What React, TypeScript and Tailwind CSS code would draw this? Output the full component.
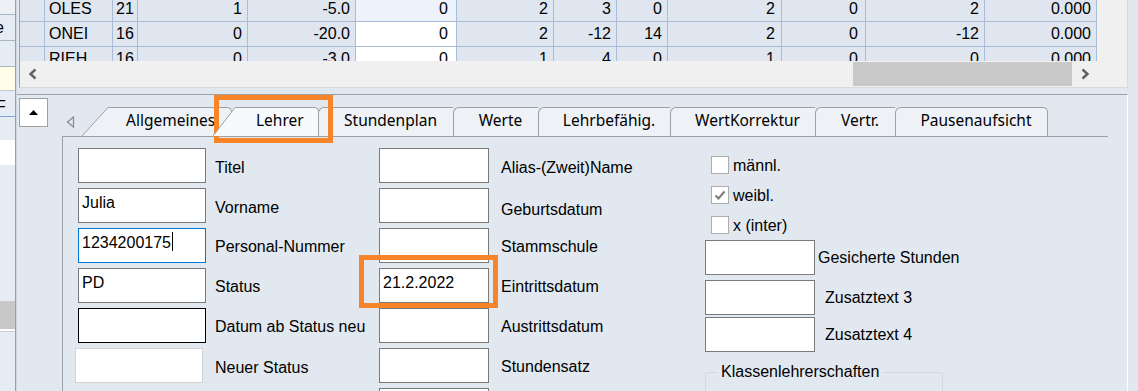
import React from "react";

type Row = { cells: string[]; hi: string };

const columns = [
  "w-[25px] justify-start",
  "w-[68px] pl-[4px] justify-start",
  "w-[25px] pl-[3px] justify-start",
  "w-[110px] pr-[5px] justify-end",
  "w-[108px] pr-[5px] justify-end",
  "w-[101px] pr-[8px] justify-end",
  "w-[97px] pr-[5px] justify-end",
  "w-[63px] pr-[5px] justify-end",
  "w-[51px] pr-[5px] justify-end",
  "w-[114px] pr-[6px] justify-end",
  "w-[84px] pr-[7px] justify-end",
  "w-[119px] pr-[5px] justify-end",
  "w-[112px] pr-[5px] justify-end",
];

const rows: Row[] = [
  { cells: ["", "OLES", "21", "1", "-5.0", "0", "2", "3", "0", "2", "0", "2", "0.000"], hi: "bg-[#eef2fa]" },
  { cells: ["", "ONEI", "16", "0", "-20.0", "0", "2", "-12", "14", "2", "0", "-12", "0.000"], hi: "bg-white" },
  { cells: ["", "RIEH", "16", "0", "-3.0", "0", "1", "4", "0", "1", "0", "0", "0.000"], hi: "bg-white" },
];

const tabs = [
  { label: "Stundenplan", w: "w-[135px]" },
  { label: "Werte", w: "w-[85px]" },
  { label: "Lehrbefähig.", w: "w-[132px]" },
  { label: "WertKorrektur", w: "w-[145px]" },
  { label: "Vertr.", w: "w-[80px]" },
  { label: "Pausenaufsicht", w: "w-[153px] border-r rounded-tr-[5px]" },
];

const Chevron = ({ dir }: { dir: "left" | "right" }) => (
  <svg width={10} height={12} viewBox="0 0 10 12" className="shrink-0">
    <path
      d={dir === "left" ? "M7.5 1.5 L2.5 6 L7.5 10.5" : "M2.5 1.5 L7.5 6 L2.5 10.5"}
      fill="none"
      stroke="#606060"
      strokeWidth={2.4}
    />
  </svg>
);

const Slant = ({ w, fill }: { w: number; fill: string }) => (
  <svg width={w} height={29} className="block shrink-0">
    <polygon points={`0,29 ${w},0.5 ${w},29`} fill={fill} />
    <line x1={0} y1={29} x2={w} y2={0.5} stroke="#a0a0a0" strokeWidth={1} />
  </svg>
);

const Field = ({
  value,
  className,
  caret,
}: {
  value?: string;
  className: string;
  caret?: boolean;
}) => (
  <div className={"h-[35px] shrink-0 bg-white border px-[3px] pt-[2px] flex items-start whitespace-nowrap " + className}>
    {value}
    {caret ? <span className="inline-block w-px h-[19px] bg-black ml-px mt-[1px]" /> : null}
  </div>
);

const Check = ({ label, checked }: { label: string; checked?: boolean }) => (
  <div className="flex items-center h-[18px] ml-[6px]">
    <div className="w-[18px] h-[18px] bg-white border border-[#adadad] flex items-center justify-center">
      {checked ? (
        <svg width={14} height={14} viewBox="0 0 14 14">
          <path d="M2.5 7.5 L5.5 10.5 L11.5 3.5" fill="none" stroke="#7a7a7a" strokeWidth={2} />
        </svg>
      ) : null}
    </div>
    <span className="ml-[4px] mt-[2px]">{label}</span>
  </div>
);

const LeftStrip = () => (
  <div className="w-[15px] shrink-0 flex flex-col bg-[#e6ecf3] overflow-hidden">
    <div className="h-[15px] border-b border-[#a9b6c6] bg-[#edf1f6]" />
    <div className="h-[26px] border-b border-[#a9b6c6] flex items-center">
      <span className="ml-[-5px]">e</span>
    </div>
    <div className="h-[26px] border-b border-[#a9b6c6]" />
    <div className="h-[24px] border-b border-[#c0c8d2] bg-[#fffce8]" />
    <div className="h-[26px] border-b border-[#7fa2d2] flex items-end">
      <span className="ml-[-4px] leading-[18px]">F</span>
    </div>
    <div className="h-[23px]" />
    <div className="h-[25px] bg-white" />
    <div className="h-[136px]" />
    <div className="h-[28px] bg-[#c8c8c8]" />
    <div className="h-[3px] border-b border-[#c9cfd6] bg-white" />
    <div className="flex-1" />
  </div>
);

const Grid = () => (
  <div className="w-[1077px] shrink-0 flex flex-col">
    {rows.map((row, r) => (
      <div key={r} className={"flex h-[25px] shrink-0 " + (r === 0 ? "mt-[-3px]" : "")}>
        {row.cells.map((c, i) => (
          <div
            key={i}
            className={
              "h-[25px] shrink-0 flex items-center border-r border-b border-[#a9bcd6] whitespace-nowrap " +
              columns[i] +
              " " +
              (i === 5 ? row.hi : "bg-[#dfe6f0]")
            }
          >
            {c}
          </div>
        ))}
      </div>
    ))}
  </div>
);

const TopPanel = () => (
  <div className="h-[94px] shrink-0 pl-[2px] pb-[6px]">
    <div className="h-[88px] border-l border-l-[#a0a0a0] border-r border-r-[#d9d9d9] border-b border-b-[#d9d9d9] flex flex-col">
      <div className="h-[61px] flex overflow-hidden">
        <Grid />
        <div className="flex-1 bg-[#f0f0f0]" />
      </div>
      <div className="h-[26px] bg-[#f0f0f0] flex items-center">
        <div className="ml-[8px]">
          <Chevron dir="left" />
        </div>
        <div className="flex-1" />
        <div className="w-[219px] h-[24px] bg-[#c9c9c9]" />
        <div className="ml-[8px] mr-[37px]">
          <Chevron dir="right" />
        </div>
      </div>
    </div>
  </div>
);

const TabRow = () => (
  <div className="h-[41px] shrink-0 flex items-end font-['Noto_Sans',sans-serif] text-[15.5px]">
    <div className="w-[20px] h-[29px] flex items-center">
      <svg width={9} height={12} viewBox="0 0 9 12" className="ml-[4px]">
        <path d="M7.5 1 L1.5 6 L7.5 11 Z" fill="none" stroke="#8a8a8a" strokeWidth={1.2} />
      </svg>
    </div>
    <div className="flex items-end">
      <Slant w={26} fill="#eef2f7" />
      <div className="h-[29px] w-[124px] border-t border-r border-[#a0a0a0] rounded-tr-[5px] bg-[#eef2f7] flex items-center pl-[18px] pb-[2px] overflow-hidden whitespace-nowrap">
        Allgemeines
      </div>
    </div>
    <div className="relative z-10 ml-[-19px] flex items-end">
      <Slant w={22} fill="#f7fafd" />
      <div className="h-[29px] w-[84px] border-t border-r border-[#a0a0a0] rounded-tr-[5px] bg-[#f7fafd] flex items-center pl-[21px] pb-[2px] whitespace-nowrap">
        Lehrer
      </div>
    </div>
    <div className="flex items-end ml-[-1px]">
      {tabs.map((t) => (
        <div
          key={t.label}
          className={
            "h-[29px] border-t border-l border-[#a0a0a0] rounded-tl-[6px] bg-[#eef2f7] flex items-center justify-center pl-[9px] pb-[2px] whitespace-nowrap " +
            t.w
          }
        >
          {t.label}
        </div>
      ))}
    </div>
  </div>
);

const Content = () => (
  <div className="flex-1 border-l border-t border-[#a0a0a0] pt-[11px] pl-[15px] flex">
    <div className="w-[301px] shrink-0 flex flex-col gap-[5px]">
      <div className="flex items-center">
        <Field className="w-[128px] border-[#7a7a7a]" />
        <span className="ml-[9px] mt-[4px]">Titel</span>
      </div>
      <div className="flex items-center">
        <Field value="Julia" className="w-[128px] border-[#7a7a7a]" />
        <span className="ml-[9px] mt-[4px]">Vorname</span>
      </div>
      <div className="flex items-center">
        <Field value="1234200175" caret className="w-[128px] border-[#0078d7]" />
        <span className="ml-[9px] mt-[3px]">Personal-Nummer</span>
      </div>
      <div className="flex items-center">
        <Field value="PD" className="w-[128px] border-[#7a7a7a]" />
        <span className="ml-[9px] mt-[3px]">Status</span>
      </div>
      <div className="flex items-center">
        <Field className="w-[128px] border-black" />
        <span className="ml-[9px] mt-[2px]">Datum ab Status neu</span>
      </div>
      <div className="flex items-center">
        <Field className="w-[128px] ml-[-3px] border-[#d2d2d2]" />
        <span className="ml-[12px] mt-[4px]">Neuer Status</span>
      </div>
    </div>

    <div className="w-[326px] shrink-0 flex flex-col gap-[5px]">
      <div className="flex items-center">
        <Field className="w-[110px] border-[#7a7a7a]" />
        <span className="ml-[12px] mt-[4px]">Alias-(Zweit)Name</span>
      </div>
      <div className="flex items-center">
        <Field className="w-[110px] border-[#7a7a7a]" />
        <span className="ml-[12px] mt-[8px]">Geburtsdatum</span>
      </div>
      <div className="flex items-center">
        <Field className="w-[110px] border-[#7a7a7a]" />
        <span className="ml-[12px] mt-[3px]">Stammschule</span>
      </div>
      <div className="flex items-center">
        <Field value="21.2.2022" className="w-[110px] border-[#7a7a7a]" />
        <span className="ml-[12px] mt-[3px]">Eintrittsdatum</span>
      </div>
      <div className="flex items-center">
        <Field className="w-[110px] border-[#7a7a7a]" />
        <span className="ml-[12px] mt-[3px]">Austrittsdatum</span>
      </div>
      <div className="flex items-center">
        <Field className="w-[110px] border-[#7a7a7a]" />
        <span className="ml-[12px] mt-[3px]">Stundensatz</span>
      </div>
      <div className="flex items-center">
        <Field className="w-[110px] border-[#7a7a7a]" />
      </div>
    </div>

    <div className="flex flex-col">
      <div className="mt-[8px] flex flex-col gap-[12px]">
        <Check label="männl." />
        <Check label="weibl." checked />
        <Check label="x (inter)" />
      </div>
      <div className="mt-[6px] flex items-center">
        <Field className="w-[110px] border-[#7a7a7a]" />
        <span className="ml-[3px] mt-[1px]">Gesicherte Stunden</span>
      </div>
      <div className="mt-[5px] flex items-center">
        <Field className="w-[110px] border-[#7a7a7a]" />
        <span className="ml-[10px] mt-[1px]">Zusatztext 3</span>
      </div>
      <div className="mt-[2px] flex items-center">
        <Field className="w-[110px] border-[#7a7a7a]" />
        <span className="ml-[10px] mt-[1px]">Zusatztext 4</span>
      </div>
      <fieldset className="mt-[8px] w-[238px] h-[60px] border border-[#d3d8de] rounded-[4px]">
        <legend className="ml-[11px] px-[4px]">Klassenlehrerschaften</legend>
      </fieldset>
    </div>
  </div>
);

const LowerPanel = () => (
  <div className="flex-1 border-t border-t-[#a0a0a0] border-r border-r-white flex">
    <div className="w-[45px] shrink-0">
      <div className="mt-[3px] ml-[2px] w-[29px] h-[29px] bg-white border border-[#a0a0a0] flex items-center justify-center">
        <svg width={9} height={5} viewBox="0 0 9 5">
          <polygon points="0,5 4.5,0 9,5" fill="#000" />
        </svg>
      </div>
    </div>
    <div className="w-[1046px] shrink-0 flex flex-col">
      <TabRow />
      <Content />
    </div>
  </div>
);

export default function App() {
  return (
    <div className="relative w-[1138px] h-[391px] overflow-hidden bg-[#e2e8f0] flex font-['Liberation_Sans',Arial,sans-serif] text-[16px] text-black">
      <LeftStrip />
      <div className="w-px shrink-0 bg-[#8fa3bf]" />
      <div className="w-px shrink-0 bg-[#cfd6df]" />
      <div className="w-[1111px] shrink-0 flex flex-col">
        <TopPanel />
        <LowerPanel />
      </div>
      <div className="flex-1" />

      <div className="absolute left-[214px] top-[95px] w-[119px] h-[48px] border-[5px] border-[#f8842a]" />
      <div className="absolute left-[359px] top-[255px] w-[139px] h-[53px] border-[5px] border-[#f8842a]" />
    </div>
  );
}
